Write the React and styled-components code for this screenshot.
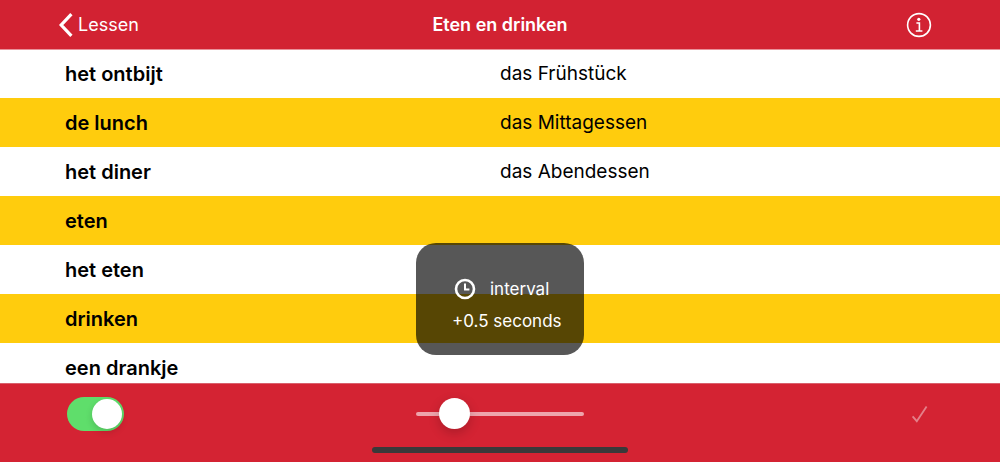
import React, { useState } from "react";
import styled, { createGlobalStyle } from "styled-components";

const words = [
  { nl: "het ontbijt", de: "das Frühstück" },
  { nl: "de lunch", de: "das Mittagessen" },
  { nl: "het diner", de: "das Abendessen" },
  { nl: "eten", de: "" },
  { nl: "het eten", de: "" },
  { nl: "drinken", de: "" },
  { nl: "een drankje", de: "" },
];

const App = () => {
  const [autoplay, setAutoplay] = useState(true);
  const [interval, setInterval] = useState(0.5);

  return (
    <Page>
      <GlobalStyle />
      <Header>
        <BackLink href="#lessen">
          <svg width="16" height="26" viewBox="0 0 16 26" aria-hidden="true">
            <path
              d="M13.4 2.2 3.2 13l10.2 10.8"
              fill="none"
              stroke="currentColor"
              strokeWidth="3.2"
            />
          </svg>
          Lessen
        </BackLink>
        <Title>Eten en drinken</Title>
        <IconButton type="button" aria-label="Info">
          <svg width="26" height="26" viewBox="0 0 26 26" aria-hidden="true">
            <circle
              cx="13"
              cy="13"
              r="11.4"
              fill="none"
              stroke="currentColor"
              strokeWidth="1.6"
            />
            <circle cx="12.8" cy="7.3" r="1.6" fill="currentColor" />
            <path
              d="M10.4 11h3v8M9.8 19h6.6"
              fill="none"
              stroke="currentColor"
              strokeWidth="1.6"
            />
          </svg>
        </IconButton>
      </Header>

      <Content>
        <WordTable>
          <tbody>
            {words.map((word) => (
              <WordRow key={word.nl}>
                <Word scope="row">{word.nl}</Word>
                <Translation>{word.de}</Translation>
              </WordRow>
            ))}
          </tbody>
        </WordTable>
        <Hud role="status">
          <HudLine>
            <svg width="22" height="22" viewBox="0 0 22 22" aria-hidden="true">
              <circle
                cx="11"
                cy="11"
                r="9"
                fill="none"
                stroke="currentColor"
                strokeWidth="2.6"
              />
              <path
                d="M11 5.4v6.2h4.4"
                fill="none"
                stroke="currentColor"
                strokeWidth="2"
              />
            </svg>
            interval
          </HudLine>
          <HudLine>+{interval} seconds</HudLine>
        </Hud>
      </Content>

      <Footer>
        <Controls>
          <Toggle
            type="checkbox"
            role="switch"
            aria-label="Autoplay"
            checked={autoplay}
            onChange={(e) => setAutoplay(e.target.checked)}
          />
          <Slider
            type="range"
            aria-label="Interval"
            min="0"
            max="3"
            step="0.5"
            value={interval}
            onChange={(e) => setInterval(Number(e.target.value))}
          />
          <IconButton type="button" aria-label="Klaar" disabled>
            <svg width="26" height="26" viewBox="0 0 26 26" aria-hidden="true">
              <path
                d="M5.6 15.4l4.2 4.8L19.6 5.4"
                fill="none"
                stroke="currentColor"
                strokeWidth="1.8"
              />
            </svg>
          </IconButton>
        </Controls>
        <HomeBar />
      </Footer>
    </Page>
  );
};

const GlobalStyle = createGlobalStyle`
  * {
    box-sizing: border-box;
  }

  body {
    margin: 0;
    background-color: #ffffff;
    font-family: Inter, "Liberation Sans", sans-serif;
    font-size: 20px;
    color: #000000;
  }
`;

const Page = styled.div`
  display: flex;
  flex-direction: column;
  height: 100vh;
  overflow: hidden;
`;

const Header = styled.header`
  position: relative;
  z-index: 1;
  display: grid;
  grid-template-columns: 1fr auto 1fr;
  align-items: center;
  flex: none;
  height: 49px;
  padding: 0 68px;
  background-color: #d22232;
  box-shadow: 0 1px 0 #e9919a;
  color: #ffffff;
`;

const BackLink = styled.a`
  display: flex;
  align-items: center;
  justify-self: start;
  gap: 4px;
  margin-left: -10px;
  color: inherit;
  font-size: 18px;
  line-height: 26px;
  text-decoration: none;
`;

const Title = styled.h1`
  margin: 0;
  font-size: 18px;
  font-weight: 600;
  line-height: 26px;
`;

const IconButton = styled.button`
  display: flex;
  justify-self: end;
  padding: 0;
  border: none;
  background: none;
  color: #ffffff;

  &:disabled {
    color: #e4808a;
  }
`;

const Content = styled.main`
  position: relative;
  flex: 1;
  min-height: 0;
  overflow: hidden;
`;

const WordTable = styled.table`
  width: 100%;
  table-layout: fixed;
  border-collapse: collapse;
`;

const WordRow = styled.tr`
  height: 49px;

  &:nth-child(even) {
    background-color: #ffcc0d;
  }
`;

const Word = styled.th`
  width: 50%;
  padding: 0 0 0 65px;
  font-weight: 600;
  text-align: left;
`;

const Translation = styled.td`
  padding: 0;
  font-size: 19px;
`;

const Hud = styled.div`
  position: absolute;
  bottom: 28px;
  left: 50%;
  width: 168px;
  height: 112px;
  padding: 30px 0 0 36px;
  border-radius: 20px;
  background-color: rgba(0, 0, 0, 0.66);
  color: #ffffff;
  font-size: 17px;
  transform: translateX(-50%);
`;

const HudLine = styled.div`
  display: flex;
  align-items: center;
  gap: 14px;
  height: 32px;
  padding-left: 2px;
  white-space: nowrap;

  & + & {
    padding-left: 0;
  }
`;

const Footer = styled.footer`
  flex: none;
  padding-bottom: 9px;
  border-top: 1px solid #d9606c;
  background-color: #d42333;
`;

const Controls = styled.div`
  display: grid;
  grid-template-columns: 1fr 168px 1fr;
  align-items: center;
  height: 60px;
  padding: 0 67px;
`;

const Toggle = styled.input`
  appearance: none;
  display: flex;
  align-items: center;
  width: 57px;
  height: 34px;
  margin: 0;
  padding: 2px;
  border-radius: 17px;
  background-color: ${({ checked }) => (checked ? "#5fde6b" : "#e4808a")};

  &::before {
    content: "";
    width: 30px;
    height: 30px;
    margin-left: ${({ checked }) => (checked ? "auto" : "0")};
    border-radius: 50%;
    background-color: #ffffff;
    box-shadow: 0 3px 7px rgba(0, 0, 0, 0.15);
  }
`;

const Slider = styled.input`
  appearance: none;
  width: 100%;
  height: 32px;
  margin: 0;
  background: none;

  &::-webkit-slider-runnable-track {
    height: 4px;
    border-radius: 2px;
    background-color: #eea4ac;
  }

  &::-webkit-slider-thumb {
    appearance: none;
    width: 31px;
    height: 31px;
    margin-top: -14px;
    border-radius: 50%;
    background-color: #ffffff;
    box-shadow: 0 4px 12px rgba(0, 0, 0, 0.2);
  }
`;

const HomeBar = styled.div`
  width: 256px;
  height: 6px;
  margin: 3px auto 0;
  border-radius: 3px;
  background-color: #39393a;
`;

export default App;
